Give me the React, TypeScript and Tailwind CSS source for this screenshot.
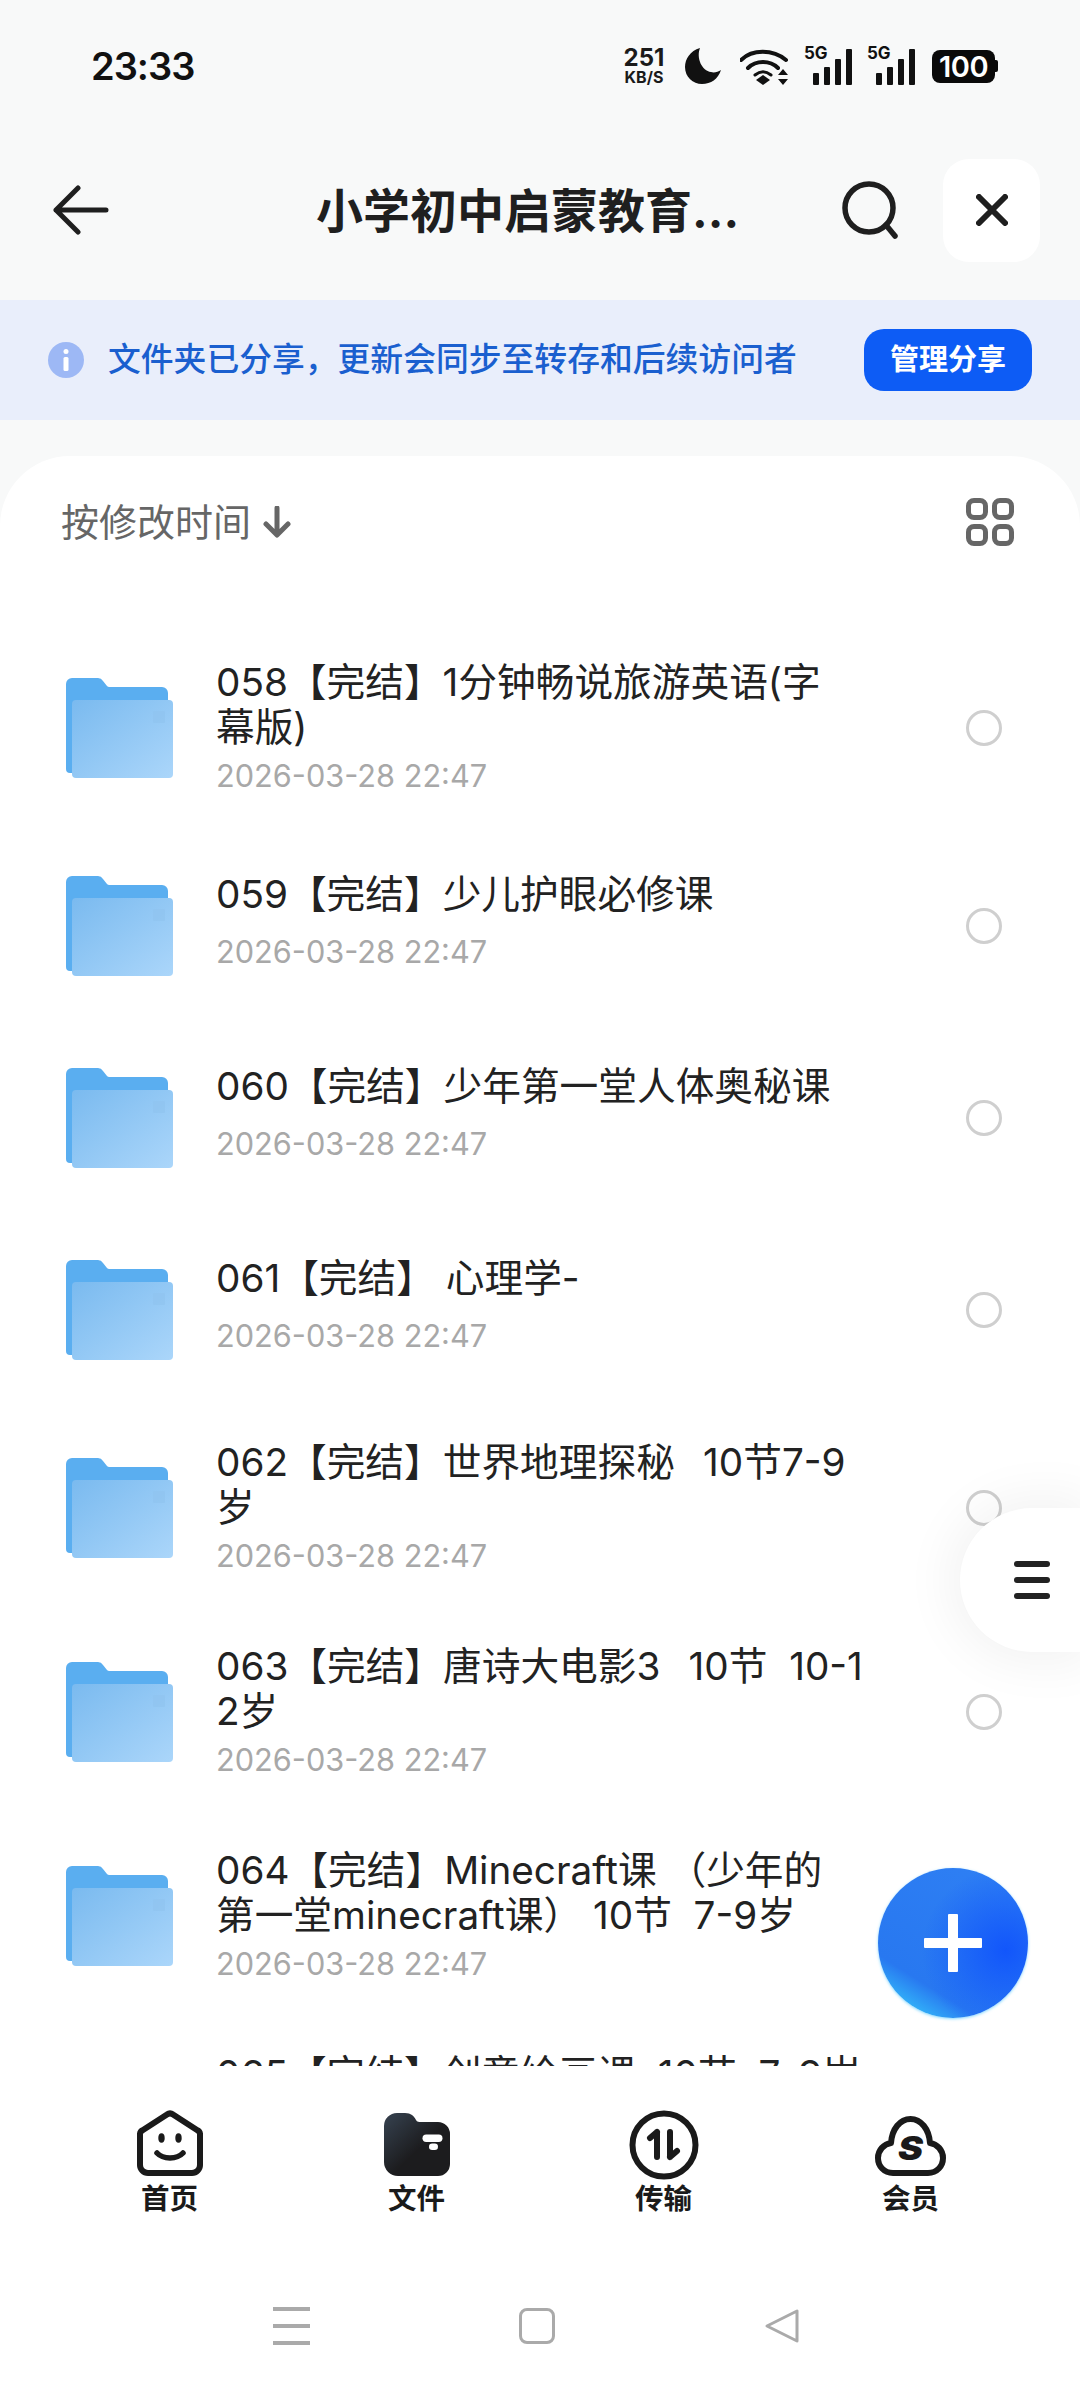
const cn = { fontFamily: 'Inter, "Noto Sans CJK SC", sans-serif' };

const files = [
  { name: '058【完结】1分钟畅说旅游英语(字\n幕版)', twoLine: true },
  { name: '059【完结】少儿护眼必修课', twoLine: false },
  { name: '060【完结】少年第一堂人体奥秘课', twoLine: false },
  { name: '061【完结】 心理学-', twoLine: false },
  { name: '062【完结】世界地理探秘  \u200610节7-9\n岁', twoLine: true },
  { name: '063【完结】唐诗大电影3  \u200610节  10-1\n2岁', twoLine: true },
  { name: '064【完结】Minecraft课 （少年的\n第一堂minecraft课） 10节  7-9岁', twoLine: true },
  { name: '065【完结】创意绘画课  10节  7-9岁', twoLine: true },
];

const FolderIcon = ({ id }: { id: number }) => (
  <svg width="107" height="100" viewBox="0 0 107 100" className="shrink-0">
    <defs>
      <linearGradient id={`front${id}`} x1="0" y1="0" x2="1" y2="1">
        <stop offset="0" stopColor="#7abaef" />
        <stop offset="1" stopColor="#abd6fa" />
      </linearGradient>
    </defs>
    <path d="M0 6a6 6 0 0 1 6-6h26a6 6 0 0 1 5 3l4 5a3 3 0 0 0 3 1h52a6 6 0 0 1 6 6v80H4a4 4 0 0 1-4-4z" fill="#5aaef0" />
    <rect x="6" y="22" width="101" height="78" rx="4" fill={`url(#front${id})`} />
    <rect x="87" y="33" width="12" height="12" rx="1" fill="#8fc3ee" opacity="0.6" />
  </svg>
);

const FileRow = ({ id, name, twoLine }: { id: number; name: string; twoLine: boolean }) => (
  <div className={`flex items-center pl-[66px] pr-[78px] shrink-0 ${twoLine ? 'h-[204px]' : 'h-[192px]'}`}>
    <FolderIcon id={id} />
    <div className={`ml-[43px] w-[660px] pt-[2px] ${twoLine ? '' : 'mb-[9px]'}`}>
      <div className={`text-[38.7px] leading-[45px] text-[#222222] whitespace-pre-wrap ${twoLine ? 'min-h-[90px]' : ''}`}>{name}</div>
      <div className={`text-[30.7px] leading-[45px] text-[#a8a8a8] ${twoLine ? 'mt-[3px]' : 'mt-[12px]'}`}>2026-03-28 22:47</div>
    </div>
    <div className="ml-auto w-[36px] h-[36px] rounded-full border-[3px] border-[#cfcfcf] shrink-0" />
  </div>
);

const StatusIcons = () => (
  <div className="flex items-center">
    <div className="flex flex-col items-center w-[44px] text-[#1a1a1a] font-bold" style={cn}>
      <span className="text-[24px] leading-[22px]">251</span>
      <span className="text-[16px] leading-[16px]">KB/S</span>
    </div>
    <svg width="38" height="38" viewBox="0 0 38 38" className="ml-[18px]">
      <path d="M16 1C6 4 1 12 1 20c0 10 8 17 17 17 9 0 16-5 19-14-3 2-7 3-10 2C18 24 12 11 16 1z" fill="#111" />
    </svg>
    <svg width="50" height="38" viewBox="0 0 50 38" className="ml-[18px]" fill="none">
      <path d="M1 13C12 2 33 2 46 13" stroke="#111" strokeWidth="4" strokeLinecap="round" />
      <path d="M8 21C16 13 30 13 38 21" stroke="#111" strokeWidth="4" strokeLinecap="round" />
      <path d="M15 28c5-4 11-4 16 0" stroke="#111" strokeWidth="3" strokeLinecap="round" />
      <path d="M23 28l7 5-7 5-7-5z" fill="#111" />
      <path d="M43 22l5 6H38zM43 38l5-6H38z" fill="#111" />
    </svg>
    {[0, 1].map((i) => (
      <div key={i} className={`relative w-[48px] h-[38px] ${i === 0 ? 'ml-[14px]' : 'ml-[15px]'}`}>
        <span className="absolute left-0 top-[-3px] text-[17px] leading-[18px] font-bold text-[#111]" style={cn}>5G</span>
        <div className="absolute right-0 bottom-0 flex items-end gap-[5px]">
          <div className="w-[6px] h-[12px] bg-[#111] rounded-[1px]" />
          <div className="w-[6px] h-[18px] bg-[#111] rounded-[1px]" />
          <div className="w-[6px] h-[26px] bg-[#111] rounded-[1px]" />
          <div className="w-[6px] h-[36px] bg-[#111] rounded-[1px]" />
        </div>
      </div>
    ))}
    <div className="flex items-center ml-[17px]">
      <div className="w-[63px] h-[33px] rounded-[8px] bg-[#0a0a0a] text-white text-[29px] font-semibold leading-[33px] text-center tracking-[-0.5px]" style={cn}>100</div>
      <div className="w-[3px] h-[12px] bg-[#0a0a0a] rounded-r-[2px]" />
    </div>
  </div>
);

const HomeIcon = () => (
  <svg width="66" height="66" viewBox="0 0 66 66" fill="none">
    <path d="M30 4.500a5 5 0 0 1 6 0L60 20a5 5 0 0 1 3 5v30a8 8 0 0 1-8 8H11a8 8 0 0 1-8-8V25a5 5 0 0 1 3-5z" stroke="#1a1a1a" strokeWidth="6" strokeLinejoin="round" />
    <ellipse cx="24.500" cy="28" rx="3.200" ry="4.800" fill="#1a1a1a" />
    <ellipse cx="41.500" cy="28" rx="3.200" ry="4.800" fill="#1a1a1a" />
    <path d="M20 43c6 6.500 20 6.500 26 0" stroke="#1a1a1a" strokeWidth="5.500" strokeLinecap="round" />
  </svg>
);

const FileIcon = () => (
  <svg width="66" height="63" viewBox="0 0 66 63">
    <defs>
      <linearGradient id="navfile" x1="0" y1="0" x2="1" y2="1">
        <stop offset="0.1" stopColor="#323c48" />
        <stop offset="0.55" stopColor="#1c1c1e" />
      </linearGradient>
    </defs>
    <path d="M0 13A13 13 0 0 1 13 0h8c6 0 9 3 11 7 1 2 3 2 5 2h17a12 12 0 0 1 12 12v30a12 12 0 0 1-12 12H14A14 14 0 0 1 0 49z" fill="url(#navfile)" />
    <rect x="38.500" y="21.500" width="20" height="7.500" rx="3.700" fill="#fff" />
    <rect x="45" y="30.500" width="9" height="6.500" rx="3.200" fill="#fff" />
  </svg>
);

const TransferIcon = () => (
  <svg width="70" height="70" viewBox="0 0 70 70" fill="none" className="-mb-[4px]">
    <circle cx="35" cy="35" r="31.500" stroke="#1a1a1a" strokeWidth="6" />
    <path d="M28 22v25M28 22l-7 6" stroke="#1a1a1a" strokeWidth="6" strokeLinecap="round" strokeLinejoin="round" />
    <path d="M41 22v25M41 47l7-6" stroke="#1a1a1a" strokeWidth="6" strokeLinecap="round" strokeLinejoin="round" />
  </svg>
);

const MemberIcon = () => (
  <svg width="71" height="60" viewBox="0 0 71 60" fill="none">
    <path d="M18 57h35c9 0 15-7 15-15 0-8-6-14-13-15C54 13 46 3 35.500 3 25 3 17 13 16 27 9 28 3 34 3 42c0 8 6 15 15 15z" stroke="#1a1a1a" strokeWidth="6" strokeLinejoin="round" />
    <text x="35.500" y="44" textAnchor="middle" fontSize="33" fontWeight="900" fontStyle="italic" fill="#1a1a1a" fontFamily="Inter, sans-serif" textLength="25" lengthAdjust="spacingAndGlyphs">S</text>
  </svg>
);

const navItems = [
  { label: '首页', icon: <HomeIcon /> },
  { label: '文件', icon: <FileIcon /> },
  { label: '传输', icon: <TransferIcon /> },
  { label: '会员', icon: <MemberIcon /> },
];

export default function App() {
  return (
    <div className="relative w-[1080px] h-[2392px] overflow-hidden bg-[#f8f9f9] flex flex-col" style={cn}>
      {/* status bar */}
      <div className="h-[132px] shrink-0 flex items-center justify-between pl-[91px] pr-[82px]">
        <span className="text-[38px] font-semibold text-[#111] tracking-[-1px]">23:33</span>
        <StatusIcons />
      </div>

      {/* header */}
      <div className="h-[168px] shrink-0 flex items-center pl-[53px] pr-[40px] pb-[12px]">
        <svg width="56" height="50" viewBox="0 0 56 50" fill="none">
          <path d="M3 25h50M25 3L3 25l22 22" stroke="#1f1f1f" strokeWidth="5" strokeLinecap="round" strokeLinejoin="round" />
        </svg>
        <div className="flex-1 pl-[207px] text-[47px] font-bold text-[#1f1f1f] leading-none">小学初中启蒙教育...</div>
        <svg width="60" height="60" viewBox="0 0 60 60" fill="none">
          <circle cx="29" cy="28" r="24" stroke="#1f1f1f" strokeWidth="5.500" />
          <path d="M46 45l9 11" stroke="#1f1f1f" strokeWidth="5.500" strokeLinecap="round" />
        </svg>
        <div className="ml-[43px] w-[97px] h-[103px] rounded-[26px] bg-white flex items-center justify-center">
          <svg width="32" height="32" viewBox="0 0 32 32" fill="none">
            <path d="M3 3l26 26M29 3L3 29" stroke="#1f1f1f" strokeWidth="6" strokeLinecap="round" />
          </svg>
        </div>
      </div>

      {/* share banner */}
      <div className="h-[120px] shrink-0 bg-[#e9eefb] flex items-center pl-[48px] pr-[48px]">
        <div className="w-[36px] h-[36px] rounded-full bg-[#9db8f5] flex items-center justify-center shrink-0">
          <svg width="6" height="22" viewBox="0 0 6 22">
            <rect x="0.500" y="0" width="5" height="5" rx="2.500" fill="#fff" />
            <rect x="0.500" y="8" width="5" height="14" rx="1.500" fill="#fff" />
          </svg>
        </div>
        <span className="ml-[24px] text-[32.8px] font-medium text-[#1a5fcf]">文件夹已分享，更新会同步至转存和后续访问者</span>
        <div className="ml-auto w-[168px] h-[62px] rounded-[20px] bg-[#0d5cf5] text-white text-[29px] font-bold flex items-center justify-center">管理分享</div>
      </div>

      {/* list card */}
      <div className="mt-[36px] flex-1 min-h-0 bg-white rounded-t-[70px] flex flex-col overflow-hidden">
        <div className="h-[170px] shrink-0 flex items-center justify-between pl-[61px] pr-[66px] pb-[38px]">
          <div className="flex items-center">
            <span className="text-[38px] text-[#666666]">按修改时间</span>
            <svg width="28" height="32" viewBox="0 0 28 32" fill="none" className="ml-[12px]">
              <path d="M14 2v26M3 18l11 11 11-11" stroke="#666" strokeWidth="5" strokeLinecap="round" strokeLinejoin="round" />
            </svg>
          </div>
          <div className="grid grid-cols-2 gap-[4px]">
            {[0, 1, 2, 3].map((i) => (
              <div key={i} className="w-[22px] h-[22px] rounded-[8px] border-[5px] border-[#666666]" />
            ))}
          </div>
        </div>
        <div className="flex-1 min-h-0 overflow-hidden">
          {files.map((f, i) => (
            <FileRow key={i} id={i} name={f.name} twoLine={f.twoLine} />
          ))}
        </div>

        {/* bottom nav */}
        <div className="h-[326px] shrink-0 bg-white flex flex-col">
          <div className="grid grid-cols-4 px-[46px] pt-[44px]">
            {navItems.map((item) => (
              <div key={item.label} className="flex flex-col items-center">
                <div className="h-[66px] flex items-end justify-center">{item.icon}</div>
                <span className="text-[28.5px] leading-[36px] font-bold text-[#1a1a1a] mt-[5px]">{item.label}</span>
              </div>
            ))}
          </div>
          <div className="mt-[90px] flex items-center justify-center gap-[209px] pr-[7px]">
            <div className="flex flex-col gap-[13px]">
              <div className="w-[37px] h-[4px] bg-[#aaaaaa]" />
              <div className="w-[37px] h-[4px] bg-[#aaaaaa]" />
              <div className="w-[37px] h-[4px] bg-[#aaaaaa]" />
            </div>
            <div className="w-[36px] h-[36px] rounded-[8px] border-[3px] border-[#aaaaaa]" />
            <svg width="36" height="36" viewBox="0 0 36 36" fill="none">
              <path d="M33 3v30L3 18z" stroke="#aaaaaa" strokeWidth="3" strokeLinejoin="round" />
            </svg>
          </div>
        </div>
      </div>

      {/* floating side pill */}
      <div className="absolute left-[960px] top-[1508px] w-[120px] h-[144px] rounded-l-[72px] bg-white shadow-[0_0_50px_12px_rgba(0,0,0,0.05)] flex flex-col justify-center gap-[10px] pl-[54px]">
        <div className="w-[36px] h-[6px] rounded-full bg-[#222222]" />
        <div className="w-[36px] h-[6px] rounded-full bg-[#222222]" />
        <div className="w-[36px] h-[6px] rounded-full bg-[#222222]" />
      </div>

      {/* add button */}
      <div className="absolute left-[878px] top-[1868px] w-[150px] h-[150px] rounded-full bg-[radial-gradient(circle_at_85%_55%,#1256fb_0%,rgba(18,86,251,0)_55%),linear-gradient(32deg,#35c4fb_8%,#2878f0_26%,#2f80f4_100%)] shadow-[0_1px_3px_rgba(80,200,255,0.7)] flex items-center justify-center">
        <svg width="58" height="58" viewBox="0 0 58 58">
          <rect x="24" y="0" width="10" height="58" fill="#fff" rx="1" />
          <rect x="0" y="24" width="58" height="10" fill="#fff" rx="1" />
        </svg>
      </div>
    </div>
  );
}
